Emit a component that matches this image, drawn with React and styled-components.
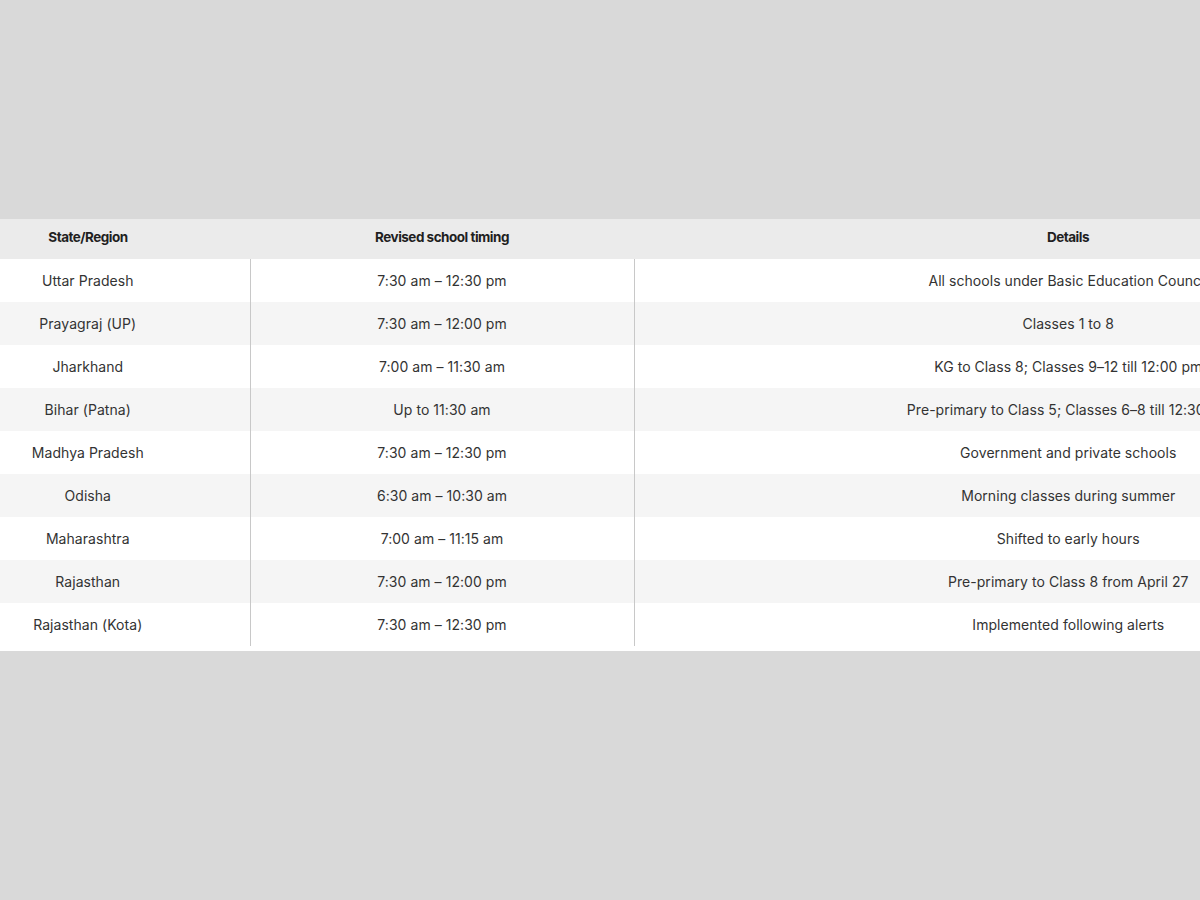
import React from 'react';
import styled, { createGlobalStyle } from 'styled-components';

const rows = [
  ['Uttar Pradesh', '7:30 am – 12:30 pm', 'All schools under Basic Education Council'],
  ['Prayagraj (UP)', '7:30 am – 12:00 pm', 'Classes 1 to 8'],
  ['Jharkhand', '7:00 am – 11:30 am', 'KG to Class 8; Classes 9–12 till 12:00 pm'],
  ['Bihar (Patna)', 'Up to 11:30 am', 'Pre-primary to Class 5; Classes 6–8 till 12:30 pm'],
  ['Madhya Pradesh', '7:30 am – 12:30 pm', 'Government and private schools'],
  ['Odisha', '6:30 am – 10:30 am', 'Morning classes during summer'],
  ['Maharashtra', '7:00 am – 11:15 am', 'Shifted to early hours'],
  ['Rajasthan', '7:30 am – 12:00 pm', 'Pre-primary to Class 8 from April 27'],
  ['Rajasthan (Kota)', '7:30 am – 12:30 pm', 'Implemented following alerts'],
];

const App = () => (
  <>
    <GlobalStyle />
    <Page>
      <Frame>
        <Table>
          <colgroup>
            <col style={{ width: 324 }} />
            <col style={{ width: 384 }} />
            <col style={{ width: 868 }} />
          </colgroup>
          <thead>
            <tr>
              <Th>State/Region</Th>
              <Th>Revised school timing</Th>
              <Th>Details</Th>
            </tr>
          </thead>
          <tbody>
            {rows.map((r, i) => (
              <Row key={r[0]} striped={i % 2 === 1}>
                <Td>{r[0]}</Td>
                <Td>{r[1]}</Td>
                <Td>{r[2]}</Td>
              </Row>
            ))}
          </tbody>
        </Table>
      </Frame>
    </Page>
  </>
);

export default App;

const GlobalStyle = createGlobalStyle`
  body {
    margin: 0;
    background: #d9d9d9;
    font-family: Inter, "Noto Sans", sans-serif;
  }
`;

const Page = styled.div`
  width: 1200px;
  height: 900px;
  overflow: hidden;
  padding-top: 219px;
  box-sizing: border-box;
`;

const Frame = styled.div`
  background: #fff;
  padding-bottom: 5px;
  overflow: hidden;
`;

const Table = styled.table`
  margin-left: -74px;
  width: 1576px;
  table-layout: fixed;
  border-collapse: collapse;
`;

const Th = styled.th`
  height: 40px;
  padding: 0 0 4px;
  box-sizing: border-box;
  background: #ebebeb;
  color: #1f1f1f;
  font-size: 13.5px;
  font-weight: 700;
  letter-spacing: -0.5px;
  text-align: center;
  vertical-align: middle;
`;

const Row = styled.tr`
  background: ${({ striped }) => (striped ? '#f5f5f5' : '#fff')};
`;

const Td = styled.td`
  height: 43px;
  padding: 0;
  color: #333;
  font-size: 14px;
  letter-spacing: 0.05px;
  text-align: center;
  vertical-align: middle;
  white-space: nowrap;
  border-right: 1px solid #c8c8c8;

  &:last-child {
    border-right: 0;
  }
`;
